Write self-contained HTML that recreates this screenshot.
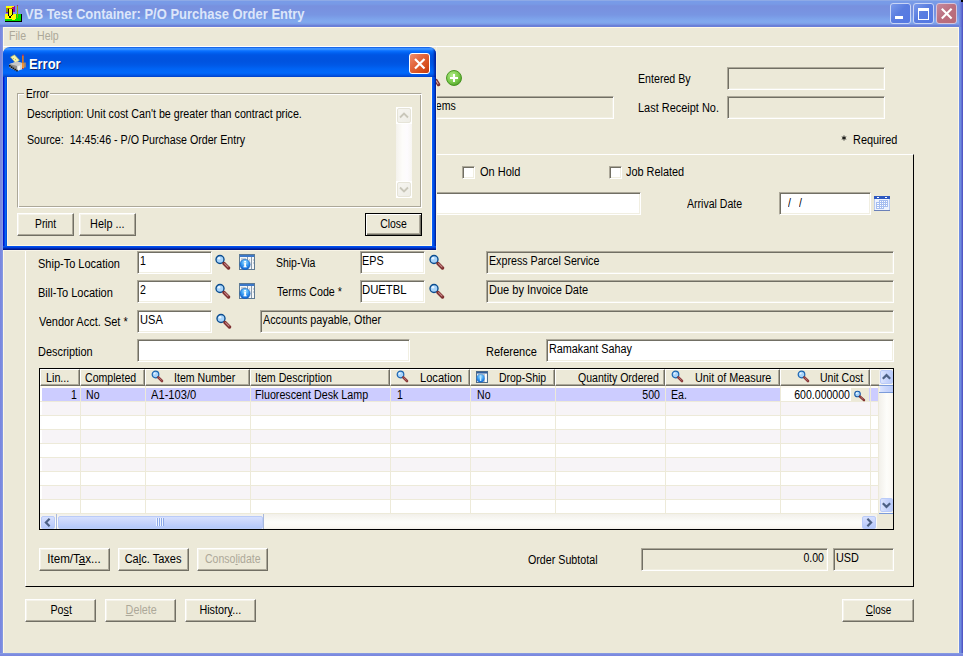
<!DOCTYPE html>
<html><head><meta charset="utf-8">
<style>
*{box-sizing:border-box}
html,body{margin:0;padding:0;width:963px;height:656px;overflow:hidden;background:#ECE9D8;position:relative;font-family:"Liberation Sans",sans-serif}
.a{position:absolute}
.t{position:absolute;font-size:12px;line-height:13px;white-space:pre;color:#000;transform:scaleX(0.88);transform-origin:0 0}
.g{color:#ACA899}
u{text-decoration:underline;text-underline-offset:1px}
.ed{position:absolute;background:#fff;border-top:1px solid #ACA899;border-left:1px solid #ACA899;border-bottom:1px solid #fff;border-right:1px solid #fff;box-shadow:inset 1px 1px 0 #716F64,inset -1px -1px 0 #F1EFE2}
.ed.dis{background:#ECE9D8}
.btn{position:absolute;background:#ECE9D8;border-top:1px solid #fff;border-left:1px solid #fff;border-bottom:1px solid #716F64;border-right:1px solid #716F64;box-shadow:inset -1px -1px 0 #ACA899,inset 1px 1px 0 #F5F3EA}
.btn.def{border:1px solid #000;box-shadow:inset 1px 1px 0 #fff,inset -1px -1px 0 #716F64,inset -2px -2px 0 #ACA899}
.bl{position:absolute;left:-20px;right:-20px;text-align:center;font-size:12px;line-height:13px;white-space:pre;transform:scaleX(0.88);transform-origin:50% 0}
</style></head><body>
<div class="a" style="left:0px;top:0px;width:963px;height:27px;background:linear-gradient(to bottom,#8EAAE6 0px,#8EAAE6 1px,#789BE8 1px,#789AE6 4px,#7890DE 6px,#7892E0 10px,#7896E3 15px,#7CA0E9 18px,#80A8EE 21px,#80A6EC 23px,#7794E2 24.5px,#6A80D8 25.5px,#6A80D8 27px)"></div>
<div class="a" style="left:959px;top:0px;width:4px;height:27px;background:linear-gradient(to right,#7592E4,#6F84DC,#5E6CD0,#4A4CC0)"></div>
<div class="a" style="left:961px;top:0px;width:2px;height:2px;background:#000"></div>
<div class="a" style="left:0px;top:27px;width:3px;height:629px;background:linear-gradient(to right,#7A85DF,#7C8CE0,#8A9FE2)"></div>
<div class="a" style="left:959px;top:27px;width:4px;height:629px;background:linear-gradient(to right,#6D8BE6,#7090E0,#6070D0,#4848C0)"></div>
<div class="a" style="left:0px;top:653px;width:963px;height:3px;background:linear-gradient(to bottom,#8A9FE2,#7C8CE0,#7A85DF)"></div>
<div class="a" style="left:3px;top:27px;width:956px;height:1px;background:#FFF8E6"></div>
<div class="a" style="left:3px;top:27px;width:1px;height:626px;background:#FFF8E6"></div>
<div class="a" style="left:958px;top:27px;width:1px;height:626px;background:#FFF8E6"></div>
<div class="t g" style="left:9.00px;top:30px;">File</div>
<div class="t g" style="left:37.00px;top:30px;">Help</div>
<div class="a" style="left:3px;top:46px;width:956px;height:1px;background:#fff"></div>
<svg class="a" style="left:4px;top:4px" width="19" height="19" viewBox="0 0 19 19" shape-rendering="crispEdges">
 <rect x="1" y="10" width="16.5" height="7.5" fill="#000"/>
 <rect x="1" y="10" width="15.5" height="6.5" fill="#00E000"/>
 <rect x="1" y="10" width="11" height="4.5" fill="#FFFF00"/>
 <rect x="8" y="15" width="3" height="1" fill="#FFFF00"/>
 <rect x="2" y="3.5" width="6.5" height="4.5" fill="#9A9A00"/>
 <rect x="2" y="2" width="9" height="1.6" fill="#FFFF00"/>
 <rect x="2.5" y="1.6" width="8" height="0.6" fill="#FFC0C0"/>
 <path d="M8.5 3.5L11 2L11 7.5L8.5 8.5Z" fill="#A000A0"/>
 <rect x="2" y="8" width="6.5" height="1" fill="#A000A0"/>
 <rect x="3.5" y="3.6" width="1.2" height="1" fill="#F00"/><rect x="6.5" y="3.6" width="1.2" height="1" fill="#F00"/>
 <path d="M4 5v6l2 2.5 2-2.5V5" fill="#FFFF00" stroke="#000" stroke-width="1"/>
 <rect x="13" y="1.5" width="1" height="12.5" fill="#9C9C00"/>
 <rect x="13" y="0.8" width="1" height="1" fill="#B000B0"/>
</svg>
<div class="a" style="left:24.6px;top:6px;font-weight:bold;font-size:14px;line-height:16px;color:#DCE6FA;white-space:pre;transform:scaleX(0.927);transform-origin:0 0">VB Test Container: P/O Purchase Order Entry</div>
<div class="a" style="left:890px;top:3px;width:21px;height:21px;border:1px solid #C9D5F6;border-radius:3px;background:linear-gradient(135deg,#7B9AEA 0%,#5A7DE0 45%,#5478E4 100%)"></div>
<div class="a" style="left:895px;top:16px;width:8px;height:3px;background:#fff"></div>
<div class="a" style="left:913px;top:3px;width:21px;height:21px;border:1px solid #C9D5F6;border-radius:3px;background:linear-gradient(135deg,#7B9AEA 0%,#5A7DE0 45%,#5478E4 100%)"></div>
<div class="a" style="left:918px;top:8px;width:11px;height:12px;border:1px solid #fff;border-top-width:3px"></div>
<div class="a" style="left:936px;top:3px;width:21px;height:21px;border:1px solid #D6C5DC;border-radius:3px;background:linear-gradient(135deg,#C58A9E 0%,#BB6F7F 50%,#B86A78 100%)"></div>
<svg class="a" style="left:936px;top:3px" width="21" height="21"><path d="M5.8 5.8L15.6 15.6M15.6 5.8L5.8 15.6" stroke="#fff" stroke-width="2.1"/></svg>
<div class="ed dis" style="left:380px;top:96px;width:234px;height:23px"></div>
<div class="t " style="left:430.00px;top:100px;">Items</div>
<svg class="a" style="left:446px;top:70px" width="16" height="16"><defs><radialGradient id="gp" cx="0.4" cy="0.35" r="0.7"><stop offset="0" stop-color="#B4EC8C"/><stop offset="0.6" stop-color="#7CCB4C"/><stop offset="1" stop-color="#4E9E26"/></radialGradient></defs><circle cx="8" cy="8" r="7.5" fill="url(#gp)" stroke="#3F8E1A" stroke-width="0.9"/><path d="M8 4V12M4 8H12" stroke="#fff" stroke-width="2"/></svg>
<div class="t " style="left:637.58px;top:73px;transform:scaleX(0.8871);">Entered By</div>
<div class="ed dis" style="left:727px;top:67px;width:158px;height:23px"></div>
<div class="t " style="left:637.55px;top:102px;transform:scaleX(0.9125);">Last Receipt No.</div>
<div class="ed dis" style="left:727px;top:96px;width:158px;height:23px"></div>
<svg class="a" style="left:841px;top:135px" width="6" height="6"><path d="M3 0.5V5.5M0.8 1.8L5.2 4.2M0.8 4.2L5.2 1.8" stroke="#000" stroke-width="0.9"/></svg>
<div class="t " style="left:852.95px;top:134px;transform:scaleX(0.9103);">Required</div>
<div class="a" style="left:25px;top:154px;width:889px;height:433px;border-top:1px solid #fff;border-left:1px solid #fff;border-right:1px solid #000;border-bottom:1px solid #000"></div>
<div class="ed" style="left:137px;top:192px;width:504px;height:23px"></div>
<div class="a" style="left:462px;top:166px;width:13px;height:13px;background:#fff;border-top:1px solid #ACA899;border-left:1px solid #ACA899;border-bottom:1px solid #fff;border-right:1px solid #fff;box-shadow:inset 1px 1px 0 #716F64,inset -1px -1px 0 #F1EFE2"></div>
<div class="t " style="left:479.57px;top:166px;transform:scaleX(0.9184);">On Hold</div>
<div class="a" style="left:609px;top:166px;width:13px;height:13px;background:#fff;border-top:1px solid #ACA899;border-left:1px solid #ACA899;border-bottom:1px solid #fff;border-right:1px solid #fff;box-shadow:inset 1px 1px 0 #716F64,inset -1px -1px 0 #F1EFE2"></div>
<div class="t " style="left:626.40px;top:166px;transform:scaleX(0.9084);">Job Related</div>
<div class="t " style="left:687.20px;top:198px;transform:scaleX(0.8803);">Arrival Date</div>
<div class="ed" style="left:779px;top:192px;width:92px;height:23px"></div>
<div class="t " style="left:788.00px;top:197px;">/</div>
<div class="t " style="left:799.00px;top:197px;">/</div>
<svg class="a" style="left:874px;top:196px" width="16" height="15" shape-rendering="crispEdges"><rect x="0" y="0" width="16" height="15" fill="#B8CAF0"/><rect x="0" y="0" width="16" height="3" fill="#2D58C0"/><rect x="3" y="1" width="2" height="1" fill="#fff"/><rect x="11" y="1" width="2" height="1" fill="#fff"/><rect x="1" y="3" width="14" height="11" fill="#EEF3FE"/><path d="M5 4H14V11H10V13H2V6H5Z" fill="#A6BEF0"/><g fill="#fff"><rect x="6" y="5" width="1" height="1"/><rect x="8" y="5" width="1" height="1"/><rect x="10" y="5" width="1" height="1"/><rect x="12" y="5" width="1" height="1"/><rect x="6" y="7" width="1" height="1"/><rect x="8" y="7" width="1" height="1"/><rect x="10" y="7" width="1" height="1"/><rect x="12" y="7" width="1" height="1"/><rect x="6" y="9" width="1" height="1"/><rect x="8" y="9" width="1" height="1"/><rect x="10" y="9" width="1" height="1"/><rect x="12" y="9" width="1" height="1"/><rect x="6" y="11" width="1" height="1"/><rect x="8" y="11" width="1" height="1"/><rect x="3" y="7" width="2" height="1"/><rect x="3" y="9" width="2" height="1"/><rect x="3" y="11" width="2" height="1"/></g><rect x="0" y="14" width="16" height="1" fill="#6A80B8"/></svg>
<div class="t " style="left:38.35px;top:258px;transform:scaleX(0.9167);">Ship-To Location</div>
<div class="ed" style="left:137px;top:251px;width:75px;height:23px"></div>
<div class="t " style="left:140.00px;top:255px;">1</div>
<svg class="a" style="left:215px;top:254px" width="16" height="16"><circle cx="5" cy="5.5" r="4" fill="#A8D4FA" stroke="#0C4D8F" stroke-width="1.4"/><circle cx="4" cy="4.3" r="1.3" fill="#E8F4FF"/><path d="M9 9.5L13.5 14" stroke="#7E3030" stroke-width="3.4" stroke-linecap="round"/><path d="M9.6 9.6L13 13" stroke="#C48484" stroke-width="1.1" stroke-linecap="round"/></svg>
<svg class="a" style="left:239px;top:254px" width="16" height="16"><defs><radialGradient id="ig239254" cx="0.5" cy="0.3" r="0.7"><stop offset="0" stop-color="#B0E8FF"/><stop offset="0.5" stop-color="#3A9CF2"/><stop offset="1" stop-color="#0A5CCC"/></radialGradient></defs><rect x="0.5" y="0.5" width="15" height="15" fill="#F4F6F8" stroke="#5E7A93"/><rect x="1" y="1" width="14" height="2" fill="#3C78C8"/><path d="M8.5 3V15M12.5 3V15" stroke="#8A9AAA"/><path d="M2 5H7M2 7H7M10 6H11M14 6H15M10 9H11M14 9H15" stroke="#98A4B0"/><circle cx="6" cy="10.5" r="5.2" fill="url(#ig239254)" stroke="#1A5CB0" stroke-width="0.5"/><rect x="5.2" y="9" width="1.8" height="4" fill="#fff"/><rect x="5.2" y="7" width="1.8" height="1.3" fill="#fff"/><rect x="4.4" y="12.4" width="3.4" height="0.9" fill="#fff"/></svg>
<div class="t " style="left:275.61px;top:257px;transform:scaleX(0.8714);">Ship-Via</div>
<div class="ed" style="left:360px;top:251px;width:65px;height:23px"></div>
<div class="t " style="left:362.39px;top:255px;transform:scaleX(0.8989);">EPS</div>
<svg class="a" style="left:429px;top:254px" width="16" height="16"><circle cx="5" cy="5.5" r="4" fill="#A8D4FA" stroke="#0C4D8F" stroke-width="1.4"/><circle cx="4" cy="4.3" r="1.3" fill="#E8F4FF"/><path d="M9 9.5L13.5 14" stroke="#7E3030" stroke-width="3.4" stroke-linecap="round"/><path d="M9.6 9.6L13 13" stroke="#C48484" stroke-width="1.1" stroke-linecap="round"/></svg>
<div class="ed dis" style="left:486px;top:251px;width:408px;height:23px"></div>
<div class="t " style="left:488.57px;top:255px;transform:scaleX(0.8899);">Express Parcel Service</div>
<div class="t " style="left:38.35px;top:287px;transform:scaleX(0.9202);">Bill-To Location</div>
<div class="ed" style="left:137px;top:280px;width:75px;height:23px"></div>
<div class="t " style="left:140.00px;top:284px;">2</div>
<svg class="a" style="left:215px;top:283px" width="16" height="16"><circle cx="5" cy="5.5" r="4" fill="#A8D4FA" stroke="#0C4D8F" stroke-width="1.4"/><circle cx="4" cy="4.3" r="1.3" fill="#E8F4FF"/><path d="M9 9.5L13.5 14" stroke="#7E3030" stroke-width="3.4" stroke-linecap="round"/><path d="M9.6 9.6L13 13" stroke="#C48484" stroke-width="1.1" stroke-linecap="round"/></svg>
<svg class="a" style="left:239px;top:283px" width="16" height="16"><defs><radialGradient id="ig239283" cx="0.5" cy="0.3" r="0.7"><stop offset="0" stop-color="#B0E8FF"/><stop offset="0.5" stop-color="#3A9CF2"/><stop offset="1" stop-color="#0A5CCC"/></radialGradient></defs><rect x="0.5" y="0.5" width="15" height="15" fill="#F4F6F8" stroke="#5E7A93"/><rect x="1" y="1" width="14" height="2" fill="#3C78C8"/><path d="M8.5 3V15M12.5 3V15" stroke="#8A9AAA"/><path d="M2 5H7M2 7H7M10 6H11M14 6H15M10 9H11M14 9H15" stroke="#98A4B0"/><circle cx="6" cy="10.5" r="5.2" fill="url(#ig239283)" stroke="#1A5CB0" stroke-width="0.5"/><rect x="5.2" y="9" width="1.8" height="4" fill="#fff"/><rect x="5.2" y="7" width="1.8" height="1.3" fill="#fff"/><rect x="4.4" y="12.4" width="3.4" height="0.9" fill="#fff"/></svg>
<div class="t " style="left:276.60px;top:286px;transform:scaleX(0.8940);">Terms Code *</div>
<div class="ed" style="left:360px;top:280px;width:65px;height:23px"></div>
<div class="t " style="left:362.33px;top:284px;transform:scaleX(0.9418);">DUETBL</div>
<svg class="a" style="left:429px;top:283px" width="16" height="16"><circle cx="5" cy="5.5" r="4" fill="#A8D4FA" stroke="#0C4D8F" stroke-width="1.4"/><circle cx="4" cy="4.3" r="1.3" fill="#E8F4FF"/><path d="M9 9.5L13.5 14" stroke="#7E3030" stroke-width="3.4" stroke-linecap="round"/><path d="M9.6 9.6L13 13" stroke="#C48484" stroke-width="1.1" stroke-linecap="round"/></svg>
<div class="ed dis" style="left:486px;top:280px;width:408px;height:23px"></div>
<div class="t " style="left:488.53px;top:284px;transform:scaleX(0.9175);">Due by Invoice Date</div>
<div class="t " style="left:39.40px;top:316px;transform:scaleX(0.9177);">Vendor Acct. Set *</div>
<div class="ed" style="left:137px;top:310px;width:75px;height:23px"></div>
<div class="t " style="left:139.55px;top:314px;transform:scaleX(0.9225);">USA</div>
<svg class="a" style="left:216px;top:313px" width="16" height="16"><circle cx="5" cy="5.5" r="4" fill="#A8D4FA" stroke="#0C4D8F" stroke-width="1.4"/><circle cx="4" cy="4.3" r="1.3" fill="#E8F4FF"/><path d="M9 9.5L13.5 14" stroke="#7E3030" stroke-width="3.4" stroke-linecap="round"/><path d="M9.6 9.6L13 13" stroke="#C48484" stroke-width="1.1" stroke-linecap="round"/></svg>
<div class="ed dis" style="left:260px;top:310px;width:634px;height:23px"></div>
<div class="t " style="left:263.00px;top:314px;transform:scaleX(0.8985);">Accounts payable, Other</div>
<div class="t " style="left:38.34px;top:346px;transform:scaleX(0.9113);">Description</div>
<div class="ed" style="left:137px;top:339px;width:273px;height:23px"></div>
<div class="t " style="left:485.96px;top:346px;transform:scaleX(0.9177);">Reference</div>
<div class="ed" style="left:546px;top:339px;width:348px;height:23px"></div>
<div class="t " style="left:549.17px;top:343px;transform:scaleX(0.9020);">Ramakant Sahay</div>
<div class="a" style="left:39px;top:368px;width:855px;height:162px;border:1px solid #000;background:#fff"></div>
<div class="a" style="left:40px;top:369px;width:839px;height:17px;background:#ECE9D8"></div>
<div class="a" style="left:40px;top:369px;width:40px;height:17px;border-left:1px solid #fff;border-top:1px solid #fff;border-right:1px solid #716F64;border-bottom:1px solid #716F64;box-shadow:inset -1px -1px 0 #ACA899"></div>
<div class="a" style="left:80px;top:369px;width:65px;height:17px;border-left:1px solid #fff;border-top:1px solid #fff;border-right:1px solid #716F64;border-bottom:1px solid #716F64;box-shadow:inset -1px -1px 0 #ACA899"></div>
<div class="a" style="left:145px;top:369px;width:105px;height:17px;border-left:1px solid #fff;border-top:1px solid #fff;border-right:1px solid #716F64;border-bottom:1px solid #716F64;box-shadow:inset -1px -1px 0 #ACA899"></div>
<div class="a" style="left:250px;top:369px;width:140px;height:17px;border-left:1px solid #fff;border-top:1px solid #fff;border-right:1px solid #716F64;border-bottom:1px solid #716F64;box-shadow:inset -1px -1px 0 #ACA899"></div>
<div class="a" style="left:390px;top:369px;width:80px;height:17px;border-left:1px solid #fff;border-top:1px solid #fff;border-right:1px solid #716F64;border-bottom:1px solid #716F64;box-shadow:inset -1px -1px 0 #ACA899"></div>
<div class="a" style="left:470px;top:369px;width:85px;height:17px;border-left:1px solid #fff;border-top:1px solid #fff;border-right:1px solid #716F64;border-bottom:1px solid #716F64;box-shadow:inset -1px -1px 0 #ACA899"></div>
<div class="a" style="left:555px;top:369px;width:110px;height:17px;border-left:1px solid #fff;border-top:1px solid #fff;border-right:1px solid #716F64;border-bottom:1px solid #716F64;box-shadow:inset -1px -1px 0 #ACA899"></div>
<div class="a" style="left:665px;top:369px;width:115px;height:17px;border-left:1px solid #fff;border-top:1px solid #fff;border-right:1px solid #716F64;border-bottom:1px solid #716F64;box-shadow:inset -1px -1px 0 #ACA899"></div>
<div class="a" style="left:780px;top:369px;width:90px;height:17px;border-left:1px solid #fff;border-top:1px solid #fff;border-right:1px solid #716F64;border-bottom:1px solid #716F64;box-shadow:inset -1px -1px 0 #ACA899"></div>
<div class="a" style="left:870px;top:369px;width:9px;height:17px;border-left:1px solid #fff;border-top:1px solid #fff;border-bottom:1px solid #716F64;box-shadow:inset 0 -1px 0 #ACA899"></div>
<div class="t " style="left:45.96px;top:372px;transform:scaleX(0.8970);">Lin...</div>
<div class="t " style="left:85.17px;top:372px;transform:scaleX(0.8812);">Completed</div>
<div class="t " style="left:174.39px;top:372px;transform:scaleX(0.8831);">Item Number</div>
<div class="t " style="left:255.40px;top:372px;transform:scaleX(0.8871);">Item Description</div>
<div class="t " style="left:420.15px;top:372px;transform:scaleX(0.9263);">Location</div>
<div class="t " style="left:499.42px;top:372px;transform:scaleX(0.8725);">Drop-Ship</div>
<div class="t " style="left:578.39px;top:372px;transform:scaleX(0.8779);">Quantity Ordered</div>
<div class="t " style="left:694.77px;top:372px;transform:scaleX(0.9018);">Unit of Measure</div>
<div class="t " style="left:820.21px;top:372px;transform:scaleX(0.8762);">Unit Cost</div>
<svg class="a" style="left:151px;top:370px" width="13" height="13"><circle cx="4.5" cy="4.5" r="3.3" fill="#A8D4FA" stroke="#1A64B0" stroke-width="1.2"/><circle cx="3.6" cy="3.6" r="1" fill="#E8F4FF"/><path d="M7.3 7.3L11 11" stroke="#8A3A3A" stroke-width="2.6" stroke-linecap="round"/><path d="M7.6 7.5L10.5 10.4" stroke="#C88080" stroke-width="0.8"/></svg>
<svg class="a" style="left:396px;top:370px" width="13" height="13"><circle cx="4.5" cy="4.5" r="3.3" fill="#A8D4FA" stroke="#1A64B0" stroke-width="1.2"/><circle cx="3.6" cy="3.6" r="1" fill="#E8F4FF"/><path d="M7.3 7.3L11 11" stroke="#8A3A3A" stroke-width="2.6" stroke-linecap="round"/><path d="M7.6 7.5L10.5 10.4" stroke="#C88080" stroke-width="0.8"/></svg>
<svg class="a" style="left:671px;top:370px" width="13" height="13"><circle cx="4.5" cy="4.5" r="3.3" fill="#A8D4FA" stroke="#1A64B0" stroke-width="1.2"/><circle cx="3.6" cy="3.6" r="1" fill="#E8F4FF"/><path d="M7.3 7.3L11 11" stroke="#8A3A3A" stroke-width="2.6" stroke-linecap="round"/><path d="M7.6 7.5L10.5 10.4" stroke="#C88080" stroke-width="0.8"/></svg>
<svg class="a" style="left:797px;top:370px" width="13" height="13"><circle cx="4.5" cy="4.5" r="3.3" fill="#A8D4FA" stroke="#1A64B0" stroke-width="1.2"/><circle cx="3.6" cy="3.6" r="1" fill="#E8F4FF"/><path d="M7.3 7.3L11 11" stroke="#8A3A3A" stroke-width="2.6" stroke-linecap="round"/><path d="M7.6 7.5L10.5 10.4" stroke="#C88080" stroke-width="0.8"/></svg>
<svg class="a" style="left:476px;top:371px" width="12" height="12"><defs><radialGradient id="sig476" cx="0.5" cy="0.3" r="0.7"><stop offset="0" stop-color="#A8E4FF"/><stop offset="0.55" stop-color="#3C9CF0"/><stop offset="1" stop-color="#0E62D0"/></radialGradient></defs><rect x="0.5" y="0.5" width="11" height="11" fill="#E8ECF0" stroke="#4E6A88"/><rect x="1" y="1" width="10" height="1.5" fill="#2E5E9E"/><rect x="8.5" y="3" width="2" height="8" fill="#fff"/><path d="M8 3V11" stroke="#8A9AAA"/><path d="M2 3.5H7M2 5H6" stroke="#9AA4B0" stroke-width="0.8"/><circle cx="4.6" cy="7.3" r="4" fill="url(#sig476)"/><path d="M4.6 4.6V5.4M4.6 6.3V10" stroke="#C8ECFF" stroke-width="1.3"/></svg>
<div class="a" style="left:40px;top:386px;width:839px;height:2px;background:#FFFCF4"></div>
<div class="a" style="left:42px;top:388px;width:837px;height:13px;background:#CCCCFF"></div>
<div class="a" style="left:40px;top:401px;width:839px;height:1px;background:#EDEAD9"></div>
<div class="a" style="left:42px;top:402px;width:837px;height:13px;background:#F7F4F7"></div>
<div class="a" style="left:40px;top:415px;width:839px;height:1px;background:#EDEAD9"></div>
<div class="a" style="left:42px;top:416px;width:837px;height:13px;background:#fff"></div>
<div class="a" style="left:40px;top:429px;width:839px;height:1px;background:#EDEAD9"></div>
<div class="a" style="left:42px;top:430px;width:837px;height:13px;background:#F7F4F7"></div>
<div class="a" style="left:40px;top:443px;width:839px;height:1px;background:#EDEAD9"></div>
<div class="a" style="left:42px;top:444px;width:837px;height:13px;background:#fff"></div>
<div class="a" style="left:40px;top:457px;width:839px;height:1px;background:#EDEAD9"></div>
<div class="a" style="left:42px;top:458px;width:837px;height:13px;background:#F7F4F7"></div>
<div class="a" style="left:40px;top:471px;width:839px;height:1px;background:#EDEAD9"></div>
<div class="a" style="left:42px;top:472px;width:837px;height:13px;background:#fff"></div>
<div class="a" style="left:40px;top:485px;width:839px;height:1px;background:#EDEAD9"></div>
<div class="a" style="left:42px;top:486px;width:837px;height:13px;background:#F7F4F7"></div>
<div class="a" style="left:40px;top:499px;width:839px;height:1px;background:#EDEAD9"></div>
<div class="a" style="left:42px;top:500px;width:837px;height:13px;background:#fff"></div>
<div class="a" style="left:40px;top:513px;width:839px;height:1px;background:#EDEAD9"></div>
<div class="a" style="left:80px;top:386px;width:1px;height:127px;background:#EDEAD9"></div>
<div class="a" style="left:145px;top:386px;width:1px;height:127px;background:#EDEAD9"></div>
<div class="a" style="left:250px;top:386px;width:1px;height:127px;background:#EDEAD9"></div>
<div class="a" style="left:390px;top:386px;width:1px;height:127px;background:#EDEAD9"></div>
<div class="a" style="left:470px;top:386px;width:1px;height:127px;background:#EDEAD9"></div>
<div class="a" style="left:555px;top:386px;width:1px;height:127px;background:#EDEAD9"></div>
<div class="a" style="left:665px;top:386px;width:1px;height:127px;background:#EDEAD9"></div>
<div class="a" style="left:780px;top:386px;width:1px;height:127px;background:#EDEAD9"></div>
<div class="a" style="left:870px;top:386px;width:1px;height:127px;background:#EDEAD9"></div>
<div class="a" style="left:878px;top:386px;width:1px;height:127px;background:#EDEAD9"></div>
<div class="t" style="left:-123px;top:389px;width:200px;text-align:right;transform-origin:100% 0;">1</div>
<div class="t " style="left:86.00px;top:389px;">No</div>
<div class="t " style="left:150.60px;top:389px;transform:scaleX(0.9291);">A1-103/0</div>
<div class="t " style="left:255.38px;top:389px;transform:scaleX(0.8928);">Fluorescent Desk Lamp</div>
<div class="t " style="left:397.00px;top:389px;">1</div>
<div class="t " style="left:477.00px;top:389px;">No</div>
<div class="t" style="left:460px;top:389px;width:200px;text-align:right;transform-origin:100% 0;">500</div>
<div class="t " style="left:671.00px;top:389px;">Ea.</div>
<div class="a" style="left:781px;top:388px;width:70px;height:13px;background:#fff"></div>
<div class="a" style="left:851px;top:388px;width:18px;height:13px;background:#ECE9D8"></div>
<div class="t" style="left:650px;top:389px;width:200px;text-align:right;transform-origin:100% 0;">600.000000</div>
<svg class="a" style="left:852px;top:388px" width="16" height="14"><circle cx="5.5" cy="6" r="2.8" fill="#A8D4FA" stroke="#1A5AA8" stroke-width="1.1"/><circle cx="4.8" cy="5.2" r="0.9" fill="#EAF6FF"/><path d="M8 8.6L12 12.2" stroke="#7E2C2C" stroke-width="2.4" stroke-linecap="round"/><path d="M8.5 8.9L11.3 11.5" stroke="#C88A8A" stroke-width="0.8"/></svg>
<div class="a" style="left:879px;top:369px;width:14px;height:144px;background:linear-gradient(to right,#F2F0EA,#FDFDFA 55%,#FBF9F4 85%,#F3F1EB)"></div>
<div class="a" style="left:880px;top:370px;width:13px;height:14px;border-radius:2px;border:1px solid #BACBF8;background:linear-gradient(to right,#DCE5FE 0%,#C9D6FC 45%,#B9CBFA 100%)"></div>
<svg class="a" style="left:880px;top:370px" width="13" height="14"><path d="M2.8 8.8L6.5 5.1L10.2 8.8" fill="none" stroke="#4D6185" stroke-width="2.2"/></svg>
<div class="a" style="left:879px;top:385px;width:14px;height:1px;background:#7C9CDA"></div>
<div class="a" style="left:880px;top:386px;width:13px;height:6px;background:linear-gradient(to right,#DCE5FE,#C9D6FC 45%,#B9CBFA)"></div>
<div class="a" style="left:879px;top:392px;width:14px;height:1px;background:#7C9CDA"></div>
<div class="a" style="left:880px;top:498px;width:13px;height:14px;border-radius:2px;border:1px solid #BACBF8;background:linear-gradient(to right,#DCE5FE 0%,#C9D6FC 45%,#B9CBFA 100%)"></div>
<svg class="a" style="left:880px;top:498px" width="13" height="14"><path d="M2.8 5.2L6.5 8.9L10.2 5.2" fill="none" stroke="#4D6185" stroke-width="2.2"/></svg>
<div class="a" style="left:879px;top:513px;width:14px;height:1px;background:#7C9CDA"></div>
<div class="a" style="left:40px;top:513px;width:839px;height:1px;background:#EDEAD9"></div>
<div class="a" style="left:40px;top:514px;width:837px;height:15px;background:linear-gradient(to bottom,#F2F0EA,#FDFDFA 55%,#FBF9F4 85%,#F3F1EB)"></div>
<div class="a" style="left:877px;top:514px;width:16px;height:15px;background:#ECE9D8"></div>
<div class="a" style="left:41px;top:516px;width:14px;height:13px;border-radius:2px;border:1px solid #BACBF8;background:linear-gradient(to bottom,#D6E0FE 0%,#C8D4FC 45%,#B4C8FA 100%)"></div>
<svg class="a" style="left:41px;top:516px" width="14" height="13"><path d="M8.6 2.8L4.9 6.5L8.6 10.2" fill="none" stroke="#4D6185" stroke-width="2.2"/></svg>
<div class="a" style="left:56px;top:514px;width:1px;height:15px;background:#A8B8DC"></div>
<div class="a" style="left:58px;top:516px;width:205px;height:13px;border-radius:2px;border:1px solid #BACBF8;background:linear-gradient(to bottom,#D6E0FE 0%,#C8D4FC 45%,#B4C8FA 100%)"></div>
<svg class="a" style="left:155px;top:518px" width="10" height="8"><path d="M1.5 0V8M3.5 0V8M5.5 0V8M7.5 0V8" stroke="#EEF3FF" stroke-width="1"/><path d="M2.5 0V8M4.5 0V8M6.5 0V8M8.5 0V8" stroke="#8CA8E8" stroke-width="1"/></svg>
<div class="a" style="left:263px;top:514px;width:1px;height:15px;background:#A8B8DC"></div>
<div class="a" style="left:862px;top:516px;width:14px;height:13px;border-radius:2px;border:1px solid #BACBF8;background:linear-gradient(to bottom,#D6E0FE 0%,#C8D4FC 45%,#B4C8FA 100%)"></div>
<svg class="a" style="left:862px;top:516px" width="14" height="13"><path d="M5.4 2.8L9.1 6.5L5.4 10.2" fill="none" stroke="#4D6185" stroke-width="2.2"/></svg>
<div class="btn " style="left:39px;top:548px;width:71px;height:23px;"><div class="bl" style="top:4px;transform:translateX(-0.50px) scaleX(0.9665);">Item/T<u>a</u>x...</div></div>
<div class="btn " style="left:118px;top:548px;width:71px;height:23px;"><div class="bl" style="top:4px;transform:translateX(-0.40px) scaleX(0.9202);">Ca<u>l</u>c. Taxes</div></div>
<div class="btn " style="left:197px;top:548px;width:71px;height:23px;color:#ACA899;"><div class="bl" style="top:4px;transform:translateX(0.30px) scaleX(0.8771);">Conso<u>l</u>idate</div></div>
<div class="t " style="left:527.58px;top:554px;transform:scaleX(0.8907);">Order Subtotal</div>
<div class="ed dis" style="left:641px;top:548px;width:187px;height:23px"></div>
<div class="t" style="left:624px;top:552px;width:200px;text-align:right;transform-origin:100% 0;">0.00</div>
<div class="ed dis" style="left:833px;top:548px;width:61px;height:23px"></div>
<div class="t " style="left:835.96px;top:552px;transform:scaleX(0.9052);">USD</div>
<div class="btn " style="left:25px;top:599px;width:71px;height:23px;"><div class="bl" style="top:4px;transform:translateX(0.67px) scaleX(0.8895);">Po<u>s</u>t</div></div>
<div class="btn " style="left:105px;top:599px;width:71px;height:23px;color:#ACA899;"><div class="bl" style="top:4px;transform:translateX(0.70px) scaleX(0.8977);"><u>D</u>elete</div></div>
<div class="btn " style="left:185px;top:599px;width:71px;height:23px;"><div class="bl" style="top:4px;transform:translateX(-0.20px) scaleX(0.8988);">Histor<u>y</u>...</div></div>
<div class="btn " style="left:842px;top:599px;width:72px;height:23px;"><div class="bl" style="top:4px;transform:translateX(0.58px) scaleX(0.8284);"><u>C</u>lose</div></div>
<div class="a" style="left:436px;top:47px;width:1px;height:204px;background:#F4F0E2"></div>
<div class="a" style="left:3px;top:250px;width:434px;height:1px;background:#F8F4E6"></div>
<div class="a" style="left:3px;top:47px;width:433px;height:203px;border-radius:7px 7px 0 0;overflow:hidden;background:linear-gradient(to right,#0018D0 0px,#0018D0 1px,#0040E0 1px,#0040E0 2px,#0866F0 2px,#0866F0 3px,#0050E0 3px,#0050E0 4px,#ECE9D8 4px,#ECE9D8 429px,#0A5CF5 429px,#0A5CF5 430px,#0050E8 430px,#0050E8 431px,#0040D0 431px,#0040D0 432px,#0024A0 432px)">
 <div class="a" style="left:0;top:0;width:433px;height:30px;background:linear-gradient(to bottom,#0047D5 0px,#2F88FF 1px,#4A9BFF 2px,#1F80FF 3px,#0A70FF 4px,#0060F0 6px,#0055E3 8px,#0053DF 14px,#0058E6 18px,#0064F5 22px,#0068FA 26px,#0058E8 28px,#0040C8 30px)"></div>
 <div class="a" style="left:429px;top:0;width:4px;height:30px;background:linear-gradient(to right,rgba(0,40,180,0) 0px,rgba(0,40,180,0.15) 1px,rgba(0,30,160,0.4) 2px,rgba(0,20,140,0.75) 3px)"></div>
 <div class="a" style="left:0;top:199px;width:433px;height:4px;background:linear-gradient(to bottom,#0050F0 0px,#0050F0 1px,#0040D8 1px,#0040D8 2px,#0028B0 2px,#0028B0 3px,#00188A 3px,#00188A 4px)"></div>
 <div class="a" style="left:4px;top:30px;width:425px;height:169px;background:#ECE9D8;border-left:1px solid #FFF8E4;border-right:1px solid #FFF8E4;border-bottom:1px solid #FFF8E4"></div>
</div>
<svg class="a" style="left:8px;top:54px" width="18" height="18" viewBox="0 0 18 18">
 <path d="M2.5 3L6.5 0.8L11.5 6.2L7.5 9Z" fill="#F4F4A8" stroke="#A8A860" stroke-width="0.6"/>
 <path d="M5 4l1 1M7 5l1 1" stroke="#B0B070" stroke-width="0.8"/>
 <path d="M1.5 10L9 7.5L16 9.5L16 14.5L9 17L1.5 13.5Z" fill="#BDBDBD"/>
 <path d="M1.5 10L9 7.5L16 9.5L9 12Z" fill="#C8C8C8"/>
 <path d="M9 12L16 9.5L16 14.5L9 17Z" fill="#D8D8D8"/><path d="M10 12.5L12 11.8L12 15.5L10 16.2Z" fill="#F4F4F4"/>
 <path d="M1.5 10L9 12L9 17L1.5 13.5Z" fill="#8C8C8C"/>
 <g fill="#141414"><rect x="1" y="11" width="1.6" height="1.6"/><rect x="2.8" y="12.4" width="1.6" height="1.6"/><rect x="4.6" y="13.6" width="1.6" height="1.6"/><rect x="6.4" y="14.8" width="1.6" height="1.6"/><rect x="8.2" y="15.8" width="1.6" height="1.6"/></g>
 <rect x="15.6" y="8.5" width="2.2" height="5" fill="#A88868"/>
 <rect x="14.2" y="1.5" width="1.4" height="13" fill="#FF7E00"/>
 <rect x="14.2" y="0.5" width="1.4" height="1.5" fill="#C02858"/>
 <rect x="14.2" y="14" width="1.4" height="1" fill="#802040"/>
</svg>
<div class="a" style="left:29px;top:55px;font-weight:bold;font-size:15px;line-height:18px;color:#fff;white-space:pre;transform:scaleX(0.86);transform-origin:0 0;text-shadow:1px 1px 0 #0A246A">Error</div>
<div class="a" style="left:409px;top:53px;width:21px;height:21px;border:1px solid #fff;border-radius:3px;background:linear-gradient(135deg,#F0906E 0%,#E46A42 35%,#D8501E 70%,#C23A10 100%)"></div>
<svg class="a" style="left:409px;top:53px" width="21" height="21"><path d="M6 6L15.5 15.5M15.5 6L6 15.5" stroke="#fff" stroke-width="2.2"/></svg>
<div class="a" style="left:17px;top:93px;width:405px;height:115px;border-top:1px solid #ACA899;border-left:1px solid #ACA899;border-bottom:1px solid #fff;border-right:1px solid #fff;box-shadow:inset 1px 1px 0 #fff,inset -1px -1px 0 #ACA899"></div>
<div class="a" style="left:24px;top:88px;width:26px;height:13px;background:#ECE9D8"></div>
<div class="t " style="left:25.62px;top:88px;transform:scaleX(0.8562);">Error</div>
<div class="t " style="left:26.99px;top:108px;transform:scaleX(0.8930);">Description: Unit cost Can't be greater than contract price.</div>
<div class="t " style="left:26.99px;top:134px;transform:scaleX(0.8882);">Source:  14:45:46 - P/O Purchase Order Entry</div>
<div class="a" style="left:396px;top:107px;width:16px;height:91px;background:linear-gradient(to right,#F4F2EC,#FDFCFA 40%,#FDFBFE 70%,#F8F6F2)"></div>
<div class="a" style="left:396px;top:107px;width:16px;height:17px;background:#fff"></div>
<div class="a" style="left:397px;top:108px;width:14px;height:15px;border:1px solid #E6E4D8;border-radius:2px;background:linear-gradient(135deg,#F6F5F0,#EEEDE6)"></div>
<svg class="a" style="left:397px;top:108px" width="14" height="15"><path d="M3 9.5L7 5.5L11 9.5" fill="none" stroke="#C9C7BA" stroke-width="1.8"/></svg>
<div class="a" style="left:396px;top:181px;width:16px;height:17px;background:#fff"></div>
<div class="a" style="left:397px;top:182px;width:14px;height:15px;border:1px solid #E6E4D8;border-radius:2px;background:linear-gradient(135deg,#F6F5F0,#EEEDE6)"></div>
<svg class="a" style="left:397px;top:182px" width="14" height="15"><path d="M3 5.5L7 9.5L11 5.5" fill="none" stroke="#C9C7BA" stroke-width="1.8"/></svg>
<svg class="a" style="left:436px;top:78px" width="6" height="10"><path d="M0 2.5L2.5 6.5" stroke="#7A3030" stroke-width="3.4" stroke-linecap="round"/><path d="M0.3 3L2 5.8" stroke="#D8A8A8" stroke-width="1.1" stroke-linecap="round"/></svg>
<div class="btn " style="left:17px;top:213px;width:57px;height:23px;"><div class="bl" style="top:4px;transform:translateX(0.11px) scaleX(0.8556);">Print</div></div>
<div class="btn " style="left:79px;top:213px;width:57px;height:23px;"><div class="bl" style="top:4px;transform:translateX(-0.20px) scaleX(0.9040);">Help ...</div></div>
<div class="btn def" style="left:365px;top:213px;width:57px;height:23px;"><div class="bl" style="top:4px;transform:translateX(0.00px) scaleX(0.8683);">Close</div></div>
</body></html>
